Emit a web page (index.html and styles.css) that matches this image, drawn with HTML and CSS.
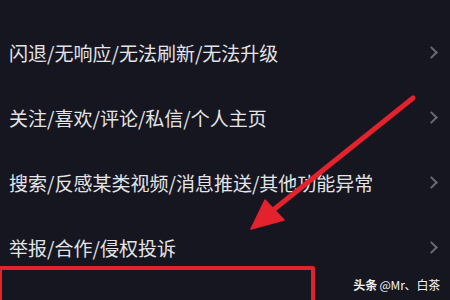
FILE: index.html
```html
<!DOCTYPE html>
<html lang="zh">
<head>
<meta charset="utf-8">
<link rel="stylesheet" href="styles.css">
</head>
<body>
<div class="screen">
  <ul class="menu">
    <li class="row"><span class="label">闪退/无响应/无法刷新/无法升级</span><span class="chev"></span></li>
    <li class="row"><span class="label">关注/喜欢/评论/私信/个人主页</span><span class="chev"></span></li>
    <li class="row"><span class="label">搜索/反感某类视频/消息推送/其他功能异常</span><span class="chev"></span></li>
    <li class="row"><span class="label">举报/合作/侵权投诉</span><span class="chev"></span></li>
  </ul>
  <div class="highlight"></div>
  <svg class="arrow" width="450" height="300" viewBox="0 0 450 300">
    <line x1="413" y1="98" x2="272" y2="211" stroke="#e3222e" stroke-width="5" stroke-linecap="round"/>
    <polygon points="251,229 265,200 284,220" fill="#e3222e" stroke="#e3222e" stroke-width="1.5" stroke-linejoin="round"/>
  </svg>
  <div class="watermark"><b>头条</b> @Mr、白茶</div>
</div>
</body>
</html>
```

FILE: styles.css
```css
html, body {
  margin: 0;
  padding: 0;
  background: #151620;
}
.screen {
  position: relative;
  width: 450px;
  height: 300px;
  overflow: hidden;
  background: #151620;
  font-family: "Noto Sans CJK SC", "Noto Sans", sans-serif;
}
.menu {
  list-style: none;
  margin: 0;
  padding: 20px 0 0 0;
}
.row {
  height: 65px;
  display: flex;
  align-items: center;
  justify-content: space-between;
  padding: 0 14px 0 9px;
}
.label {
  color: #e4e4e7;
  font-size: 19px;
  line-height: 1;
}
.chev {
  width: 7px;
  height: 7px;
  border-right: 2px solid #6a6a72;
  border-top: 2px solid #6a6a72;
  transform: rotate(45deg);
  margin-right: 0;
}
.highlight {
  position: absolute;
  left: -2px;
  top: 266px;
  width: 309px;
  height: 60px;
  border: 4px solid #e3222e;
  border-radius: 2px;
}
.arrow {
  position: absolute;
  left: 0;
  top: 0;
}
.watermark {
  position: absolute;
  right: 10px;
  top: 277px;
  color: #f2f2f2;
  font-size: 12px;
  line-height: 16px;
  letter-spacing: -0.2px;
  font-family: "Noto Sans CJK SC", "Noto Sans", sans-serif;
}
.watermark b {
  font-weight: 700;
}
```
